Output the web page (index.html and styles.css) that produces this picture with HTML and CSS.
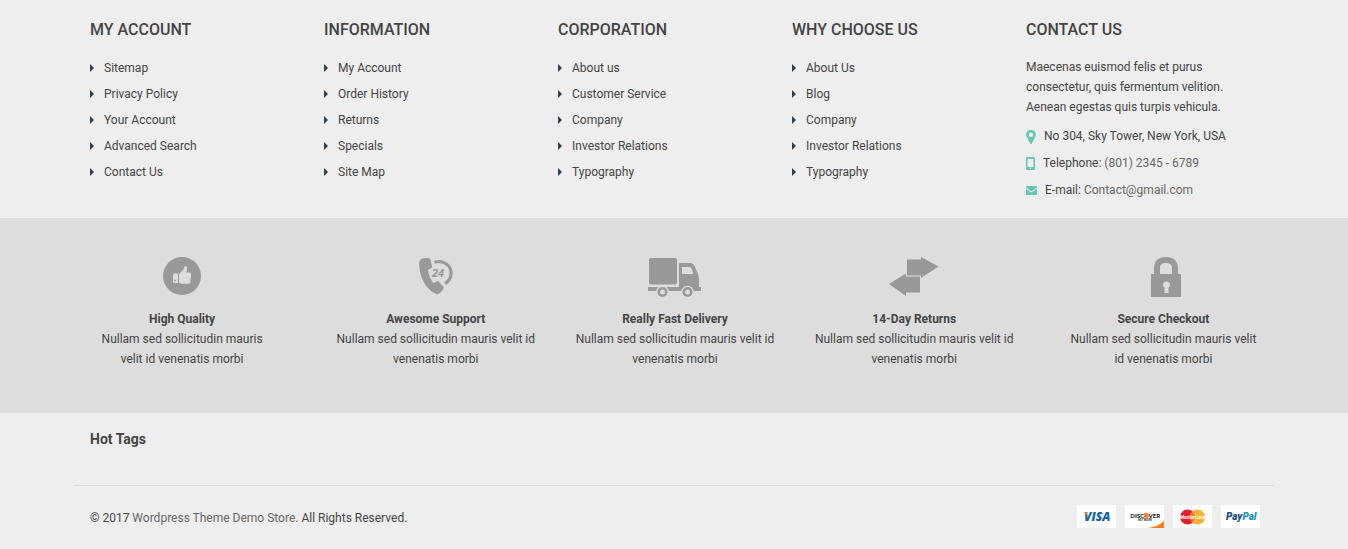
FILE: index.html
```html
<!DOCTYPE html>
<html lang="en">
<head>
<meta charset="utf-8">
<meta name="viewport" content="width=device-width, initial-scale=1">
<title>Wordpress Theme Demo Store</title>
<link rel="stylesheet" href="styles.css">
</head>
<body>
<footer class="footer">
  <div class="container footer-columns">
    <section class="footer-column">
      <h2 class="footer-title">MY ACCOUNT</h2>
      <ul class="link-list">
        <li><a href="#">Sitemap</a></li>
        <li><a href="#">Privacy Policy</a></li>
        <li><a href="#">Your Account</a></li>
        <li><a href="#">Advanced Search</a></li>
        <li><a href="#">Contact Us</a></li>
      </ul>
    </section>
    <section class="footer-column">
      <h2 class="footer-title">INFORMATION</h2>
      <ul class="link-list">
        <li><a href="#">My Account</a></li>
        <li><a href="#">Order History</a></li>
        <li><a href="#">Returns</a></li>
        <li><a href="#">Specials</a></li>
        <li><a href="#">Site Map</a></li>
      </ul>
    </section>
    <section class="footer-column">
      <h2 class="footer-title">CORPORATION</h2>
      <ul class="link-list">
        <li><a href="#">About us</a></li>
        <li><a href="#">Customer Service</a></li>
        <li><a href="#">Company</a></li>
        <li><a href="#">Investor Relations</a></li>
        <li><a href="#">Typography</a></li>
      </ul>
    </section>
    <section class="footer-column">
      <h2 class="footer-title">WHY CHOOSE US</h2>
      <ul class="link-list">
        <li><a href="#">About Us</a></li>
        <li><a href="#">Blog</a></li>
        <li><a href="#">Company</a></li>
        <li><a href="#">Investor Relations</a></li>
        <li><a href="#">Typography</a></li>
      </ul>
    </section>
    <section class="footer-column">
      <h2 class="footer-title">CONTACT US</h2>
      <p class="contact-text">Maecenas euismod felis et purus consectetur, quis fermentum velition. Aenean egestas quis turpis vehicula.</p>
      <ul class="contact-list">
        <li>
          <svg class="contact-icon" width="10" height="14" viewBox="0 0 10 14" aria-hidden="true"><path fill-rule="evenodd" d="M5 0C2.200 0 .2 2 .2 4.700c0 1 .3 1.700.7 2.500l3.200 6.200c.4.700 1.400.7 1.800 0l3.200-6.200c.4-.8.700-1.500.7-2.500C9.800 2 7.800 0 5 0zm0 2.600a2.200 2.200 0 1 1 0 4.400 2.200 2.200 0 0 1 0-4.400z"/></svg>
          <span>No 304, Sky Tower, New York, USA</span>
        </li>
        <li>
          <svg class="contact-icon" width="9" height="13" viewBox="0 0 9 13" aria-hidden="true"><path fill-rule="evenodd" d="M1.500 0h6C8.400 0 9 .6 9 1.500v10c0 .9-.6 1.500-1.500 1.500h-6C.6 13 0 12.400 0 11.500v-10C0 .6.6 0 1.500 0zM1.500 2v8h6V2zM3.800 11.200a.7.700 0 1 0 1.400 0 .7.700 0 0 0-1.400 0z"/></svg>
          <span>Telephone: <a href="#">(801) 2345 - 6789</a></span>
        </li>
        <li>
          <svg class="contact-icon" width="11" height="9" viewBox="0 0 11 9" aria-hidden="true"><path d="M.8 0h9.400c.5 0 .8.300.8.800 0 .6-.4 1.100-.9 1.400L6.500 4.700c-.7.500-1.300.5-2 0L.9 2.200C.4 1.900 0 1.400 0 .9 0 .3.300 0 .8 0zM0 2.800l4 2.800c1 .7 2 .7 3 0l4-2.800v5.200c0 .6-.4 1-1 1H1c-.6 0-1-.4-1-1z"/></svg>
          <span>E-mail: <a href="#">Contact@gmail.com</a></span>
        </li>
      </ul>
    </section>
  </div>

  <div class="services">
    <div class="container services-grid">
      <div class="service">
        <svg class="service-icon" width="38" height="40" viewBox="0 0 38 40" aria-hidden="true">
          <circle cx="19" cy="19" r="19"/>
          <path class="cutout" fill-rule="evenodd" d="M10 17.500c0-.6.4-1 1-1h4v9.500h-4c-.6 0-1-.4-1-1zM11.500 22.800v1.500H13v-1.500zM16 17l4.500-4.500c.8-.8.8-1.800 1-2.700.1-1 .9-1.100 1.700-.6 1.500 1 1.100 4 .1 6.300h3.200c1 0 1.600.8 1.500 1.700l-.7 8c-.1.900-.8 1.600-1.800 1.600h-6c-1.300 0-2-.8-3.500-.8z"/>
        </svg>
        <h3 class="service-title">High Quality</h3>
        <p>Nullam sed sollicitudin mauris velit id venenatis morbi</p>
      </div>
      <div class="service">
        <svg class="service-icon" width="34" height="40" viewBox="0 0 34 40" aria-hidden="true">
          <path d="M3 1.500C5 .9 8 .8 9.600 1.100c1 .2 1.700 1 1.900 2L13 9.500c.2 1-.2 1.600-1.100 2l-2.900 1.300c.6 5.200 2.500 9.700 5.600 13.500l2.900-1.900c.8-.5 1.500-.5 2.200.2l4.500 4.800c.6.700.6 1.500.1 2.300-1 1.800-2.400 3.500-4.300 4.800-1.200.8-2.600.9-4 .1C7.200 31.800 1.300 22.300.2 8.500-.1 5.200.6 2.600 3 1.500z"/>
          <path class="stroke" d="M15.500 5.300C23 2.600 31 7.500 32 14.600c.5 5.200-1.900 9.500-6 12"/>
          <text class="service-number" x="13" y="20">24</text>
        </svg>
        <h3 class="service-title">Awesome Support</h3>
        <p>Nullam sed sollicitudin mauris velit id venenatis morbi</p>
      </div>
      <div class="service">
        <svg class="service-icon" width="53" height="40" viewBox="0 0 53 40" aria-hidden="true">
          <rect x="1" y="1" width="28" height="26.500" rx="2"/>
          <path d="M0 30h53v4H0z"/>
          <path fill-rule="evenodd" d="M31 6h11c2 0 3.500 1 4.500 3l3.500 8 1 5v9H31zM34 10v7h11.500l-2-5.500c-.4-1-1-1.500-2-1.500z"/>
          <circle class="cutout" cx="14.500" cy="35" r="6.300"/><circle class="cutout" cx="39.500" cy="35" r="6.300"/>
          <circle cx="14.500" cy="35" r="5"/><circle cx="39.500" cy="35" r="5"/>
          <circle class="cutout" cx="14.500" cy="35" r="2.500"/><circle class="cutout" cx="39.500" cy="35" r="2.500"/>
        </svg>
        <h3 class="service-title">Really Fast Delivery</h3>
        <p>Nullam sed sollicitudin mauris velit id venenatis morbi</p>
      </div>
      <div class="service">
        <svg class="service-icon" width="50" height="40" viewBox="0 0 50 40" aria-hidden="true">
          <path d="M18 2.500h14V0l17.500 9.500L32 21v-2.500H18zM31 19.500v16H17V39L0 27l17-10.500v3z"/>
        </svg>
        <h3 class="service-title">14-Day Returns</h3>
        <p>Nullam sed sollicitudin mauris velit id venenatis morbi</p>
      </div>
      <div class="service">
        <svg class="service-icon" width="36" height="40" viewBox="0 0 36 40" aria-hidden="true">
          <path fill-rule="evenodd" d="M6 17h3v-6C9 4.500 13 0 21 0s12 4.500 12 11v6h2c.6 0 1 .4 1 1v22H6zM15 17h12v-6c0-3.300-2.300-5-6-5s-6 1.700-6 5zM18 28c0 1 .7 2 1.500 2.500V36h4v-5.500c.9-.5 1.500-1.500 1.500-2.500a3.500 3.500 0 0 0-7 0z"/>
        </svg>
        <h3 class="service-title">Secure Checkout</h3>
        <p>Nullam sed sollicitudin mauris velit id venenatis morbi</p>
      </div>
    </div>
  </div>

  <div class="tags">
    <div class="container">
      <h2 class="tags-title">Hot Tags</h2>
    </div>
  </div>

  <div class="container copyright">
    <p>© 2017 <a href="#">Wordpress Theme Demo Store.</a> All Rights Reserved.</p>
    <ul class="payments">
      <li>
        <svg width="39" height="23" viewBox="0 0 39 23" role="img" aria-label="Visa">
          <text class="visa" x="7" y="16">VISA</text>
          <path fill="#f9a533" d="M6 7.500h4.300l1.700 5C10.500 9.800 8.500 8.300 6 7.500z"/>
        </svg>
      </li>
      <li>
        <svg width="39" height="23" viewBox="0 0 39 23" role="img" aria-label="Discover">
          <text class="discover" x="19" y="13" text-anchor="end">DISC</text>
          <circle cx="21.200" cy="10.500" r="2.700" fill="#f58634"/>
          <text class="discover" x="23.500" y="13">VER</text>
          <text class="network" x="13" y="16">NETWORK</text>
          <path fill="#f5821f" d="M39 16v7H23c7-1 12-3.300 16-7z"/>
        </svg>
      </li>
      <li>
        <svg width="39" height="23" viewBox="0 0 39 23" role="img" aria-label="MasterCard">
          <circle cx="14.500" cy="12" r="7.500" fill="#eb1c2d"/>
          <circle cx="24.500" cy="12" r="7.500" fill="#fbb02f"/>
          <path fill="#f47b29" d="M19.500 6.400a7.500 7.500 0 0 1 0 11.200 7.500 7.500 0 0 1 0-11.200z"/>
          <text class="mastercard" x="19.500" y="14">MasterCard</text>
        </svg>
      </li>
      <li>
        <svg width="39" height="23" viewBox="0 0 39 23" role="img" aria-label="PayPal">
          <text class="paypal" x="5" y="15">Pay<tspan fill="#2790c3">Pal</tspan></text>
        </svg>
      </li>
    </ul>
  </div>
</footer>
</body>
</html>
```
FILE: styles.css
```css
* {
  box-sizing: border-box;
}

body,
h2,
h3,
p,
ul {
  margin: 0;
}

ul {
  padding: 0;
  list-style: none;
}

body {
  background: #eee;
  color: #444;
  font-family: Roboto, "Liberation Sans", sans-serif;
  font-size: 12px;
  line-height: 20px;
}

svg {
  display: block;
  flex: none;
}

a {
  color: #666;
  text-decoration: none;
}

a:hover {
  color: #66c6b4;
}

.container {
  max-width: 1200px;
  margin: 0 auto;
  padding: 0 14px 0 16px;
}

/* Link columns */
.footer-columns {
  display: grid;
  grid-template-columns: repeat(5, 1fr);
  padding-top: 20px;
  padding-bottom: 14px;
}

.footer-title {
  margin-bottom: 15px;
  font-size: 16px;
  font-weight: 500;
}

.link-list li {
  display: flex;
  align-items: center;
  gap: 10px;
  line-height: 26px;
}

.link-list li::before {
  content: "";
  border: solid transparent;
  border-width: 4px 0 4px 4px;
  border-left-color: #2f3f4f;
}

.link-list a {
  color: #444;
}

.contact-text {
  padding: 2px 30px 0 0;
  margin-bottom: 6px;
}

.contact-list li {
  display: flex;
  align-items: center;
  gap: 8px;
  line-height: 27px;
}

.contact-icon {
  fill: #66c6b4;
}

/* Service band */
.services {
  padding: 39px 0 44px;
  background: #ddd;
}

.services-grid {
  display: grid;
  grid-template-columns: 226fr 239fr 239fr 239fr 226fr;
  text-align: center;
}

.service {
  padding: 0 20px;
}

.service:first-child {
  padding: 0 42px 0 0;
}

.service:last-child {
  padding: 0 0 0 33px;
}

.service-icon {
  margin: 0 auto 12px;
  fill: #999;
}

.service-icon .cutout {
  fill: #ddd;
}

.service-icon .stroke {
  fill: none;
  stroke: #999;
  stroke-width: 3;
}

.service-number {
  font: italic 700 11px "Open Sans", sans-serif;
}

.service-title {
  font-size: 12px;
  font-weight: 700;
}

/* Tags and copyright */
.tags {
  max-width: 1200px;
  margin: 0 auto;
  padding: 16px 0 36px;
  border-bottom: 1px solid #ddd;
}

.tags-title {
  font-size: 14px;
  font-weight: 700;
}

.copyright {
  display: flex;
  align-items: flex-end;
  justify-content: space-between;
  padding-top: 19px;
  padding-bottom: 20px;
}

.payments {
  display: flex;
  gap: 9px;
}

.payments li {
  background: #fff;
}

.visa {
  fill: #0e63b0;
  font: italic 800 12px "Open Sans", sans-serif;
}

.discover {
  fill: #222;
  font: 900 6px Lato, sans-serif;
}

.network {
  fill: #444;
  font: 700 3px Roboto, sans-serif;
}

.mastercard {
  fill: #fff;
  font: italic 700 5px Roboto, sans-serif;
  text-anchor: middle;
}

.paypal {
  fill: #1f4c80;
  font: italic 900 10px Roboto, sans-serif;
}
```
